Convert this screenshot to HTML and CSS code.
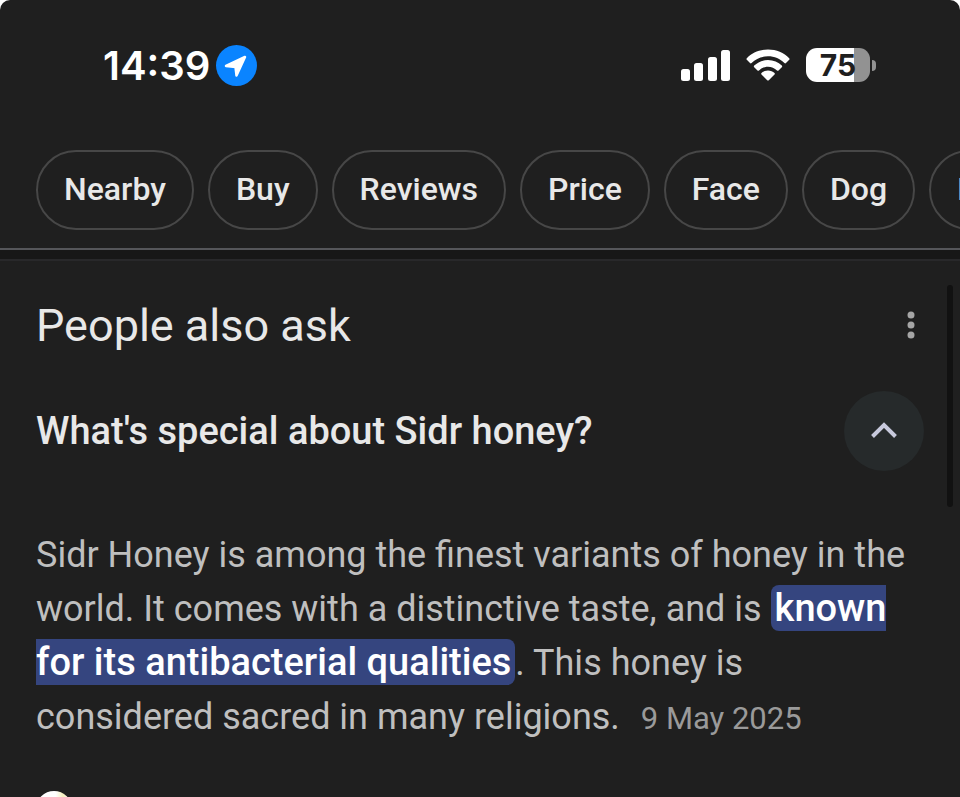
FILE: index.html
```html
<!DOCTYPE html>
<html lang="en">
<head>
    <meta charset="UTF-8">
    <meta name="viewport" content="width=device-width, initial-scale=1.0">
    <title>Sidr honey</title>
    <link rel="stylesheet" href="styles.css">
</head>
<body>
    <div class="page">
        <header class="status-bar">
            <div class="status-left">
                <span class="clock">14:39</span>
                <svg class="location" viewBox="0 0 41 41" aria-hidden="true">
                    <circle cx="20.5" cy="20.5" r="20.5" fill="#0a84ff"/>
                    <path d="M29 12 L20.5 30.5 L19.5 22 L10 21 Z" fill="#fff" stroke="#fff" stroke-width="2.5" stroke-linejoin="round"/>
                </svg>
            </div>
            <div class="status-right">
                <svg class="signal" viewBox="0 0 49 31" fill="#fff" aria-hidden="true">
                    <rect x="0" y="19" width="9" height="12" rx="2.5"/>
                    <rect x="13" y="13" width="9" height="18" rx="2.5"/>
                    <rect x="27" y="7" width="9" height="24" rx="2.5"/>
                    <rect x="40" y="0" width="9" height="31" rx="2.5"/>
                </svg>
                <svg class="wifi" viewBox="0 0 44 32" fill="#fff" aria-hidden="true">
                    <path d="M22 0.500 C30.500 0.500 38 3.800 43.200 9.200 C43.700 9.700 43.700 10.300 43.200 10.800 L40 14 C39.500 14.500 38.900 14.500 38.400 14 C34.200 9.800 28.500 7.300 22 7.300 C15.500 7.300 9.800 9.800 5.600 14 C5.100 14.500 4.500 14.500 4 14 L0.800 10.800 C0.300 10.300 0.300 9.700 0.800 9.200 C6 3.800 13.500 0.500 22 0.500 Z"/>
                    <path d="M22 11 C27.500 11 32.300 13.100 35.800 16.600 C36.300 17.100 36.300 17.700 35.800 18.200 L32.500 21.400 C32 21.900 31.500 21.900 31 21.400 C28.600 19.100 25.500 17.700 22 17.700 C18.500 17.700 15.400 19.100 13 21.400 C12.500 21.900 12 21.900 11.500 21.400 L8.200 18.200 C7.700 17.700 7.700 17.100 8.200 16.600 C11.700 13.100 16.500 11 22 11 Z"/>
                    <path d="M22 21.500 C24.600 21.500 26.900 22.400 28.500 24 C29 24.500 29 25.100 28.500 25.600 L22.800 31.200 C22.300 31.700 21.700 31.700 21.200 31.200 L15.500 25.600 C15 25.100 15 24.500 15.500 24 C17.100 22.400 19.400 21.500 22 21.500 Z"/>
                </svg>
                <div class="battery">
                    <span class="battery-level">75</span>
                    <span class="battery-cap"></span>
                </div>
            </div>
        </header>

        <nav class="chips">
            <button class="chip">Nearby</button>
            <button class="chip">Buy</button>
            <button class="chip">Reviews</button>
            <button class="chip">Price</button>
            <button class="chip">Face</button>
            <button class="chip">Dog</button>
            <button class="chip">M</button>
        </nav>
        <div class="divider"></div>

        <main class="content">
            <div class="row heading">
                <h1>People also ask</h1>
                <button class="more" aria-label="More options">
                    <svg viewBox="0 0 8 28" fill="#a5a5a5">
                        <circle cx="4" cy="4" r="3.500"/>
                        <circle cx="4" cy="14" r="3.500"/>
                        <circle cx="4" cy="24" r="3.500"/>
                    </svg>
                </button>
            </div>
            <div class="row question">
                <h2>What's special about Sidr honey?</h2>
                <button class="toggle" aria-label="Collapse" aria-expanded="true">
                    <svg viewBox="0 0 26 16" fill="none" stroke="#c7c9dc" stroke-width="4">
                        <path d="M1.500 14.500 L13 3 L24.500 14.500"/>
                    </svg>
                </button>
            </div>
            <p class="answer">Sidr Honey is among the finest variants of honey in the world. It comes with a distinctive taste, and is <mark>known for its antibacterial qualities</mark>. This honey is<br>considered sacred in many religions. <span class="date">9 May 2025</span></p>
            <div class="source-icon"></div>
        </main>
        <div class="scrollbar"></div>
    </div>
</body>
</html>
```

FILE: styles.css
```css
* {
    box-sizing: border-box;
}
body {
    margin: 0;
    background: #fff;
    font-family: Roboto, "Liberation Sans", sans-serif;
}
button {
    padding: 0;
    border: none;
    background: none;
    font-family: inherit;
}
.page {
    position: relative;
    height: 100vh;
    overflow: hidden;
    border-radius: 10px 10px 0 0;
    background: #1f1f1f;
}
.status-bar {
    display: flex;
    justify-content: space-between;
    align-items: center;
    height: 130px;
    padding: 0 84px 0 103px;
    color: #fff;
    font-family: Inter, sans-serif;
}
.status-left,
.status-right {
    display: flex;
    align-items: center;
}
.status-left {
    gap: 6px;
}
.clock {
    font-size: 40px;
    font-weight: 600;
}
.location {
    width: 41px;
    height: 41px;
}
.status-right {
    gap: 16px;
}
.signal {
    width: 49px;
    height: 31px;
}
.wifi {
    width: 44px;
    height: 32px;
}
.battery {
    display: flex;
    align-items: center;
    gap: 2px;
}
.battery-level {
    width: 64px;
    border-radius: 11px;
    background: linear-gradient(to right, #fff 75%, #929292 75%);
    color: #1f1f1f;
    font-size: 30px;
    font-weight: 700;
    line-height: 34px;
    text-align: center;
}
.battery-cap {
    width: 4px;
    height: 11px;
    border-radius: 0 4px 4px 0;
    background: #929292;
}
.chips {
    display: flex;
    gap: 14px;
    padding: 20px 0 18px 36px;
    overflow: hidden;
}
.chip {
    flex: none;
    height: 80px;
    padding: 0 26px 2px;
    border: 2px solid #474747;
    border-radius: 40px;
    color: #e8e8e8;
    font-size: 32px;
    font-weight: 500;
}
.divider {
    height: 13px;
    border-top: 2px solid #55565a;
    border-bottom: 2px solid #28282a;
    background: #171717;
}
.content {
    padding: 32px 36px 0;
}
.row {
    display: flex;
    justify-content: space-between;
    align-items: center;
}
h1,
h2 {
    margin: 0;
    color: #e8e8e8;
}
h1 {
    font-size: 45px;
    font-weight: 400;
    line-height: 66px;
}
h2 {
    font-size: 38px;
    font-weight: 500;
}
.question {
    margin-top: 32px;
}
.more {
    width: 26px;
    height: 40px;
}
.more svg {
    width: 8px;
    height: 28px;
}
.toggle {
    width: 80px;
    height: 80px;
    border-radius: 50%;
    background: #262a2b;
}
.toggle svg {
    width: 26px;
    height: 16px;
}
.answer {
    margin: 57px 0 0;
    color: #bfbfbf;
    font-size: 36px;
    line-height: 54px;
}
mark {
    padding: 1px 4px;
    border-radius: 8px;
    background: #35457f;
    color: #fff;
    font-size: 38px;
    font-weight: 500;
    line-height: 1;
}
.date {
    margin-left: 12px;
    color: #9a9a9a;
    font-size: 31px;
    line-height: 1;
}
.source-icon {
    width: 36px;
    height: 36px;
    margin-top: 47px;
    border-radius: 50%;
    background: linear-gradient(to right, #fff 55%, #f5efbd 75%, #fff);
}
.scrollbar {
    position: absolute;
    top: 285px;
    right: 7px;
    width: 6px;
    height: 222px;
    border-radius: 3px;
    background: #111;
}
```
